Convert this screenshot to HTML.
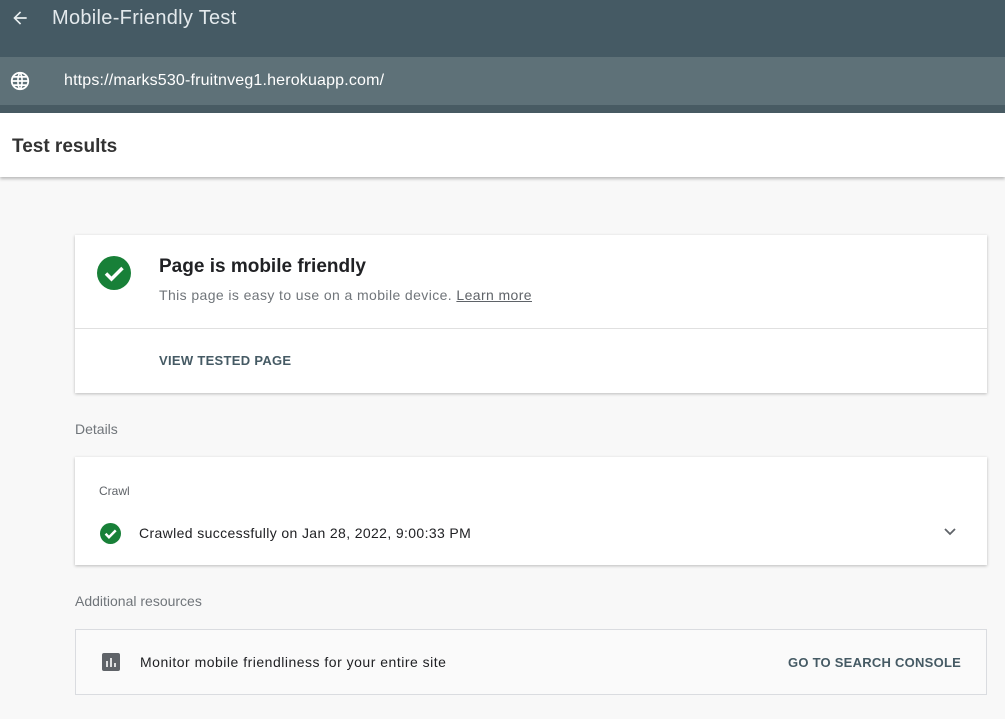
<!DOCTYPE html>
<html><head><style>
body{margin:0;width:1005px;height:719px;background:#f8f8f8;font-family:"Liberation Sans",sans-serif;overflow:hidden;position:relative}
.a{position:absolute;white-space:nowrap}
</style></head><body>
<div class="a" style="left:0;top:0;width:1005px;height:57px;background:#455a64"></div>
<svg class="a" style="left:10px;top:8px" width="20" height="20" viewBox="0 0 24 24"><path d="M20 11H7.8l5.6-5.6L12 4l-8 8 8 8 1.4-1.4L7.8 13H20z" fill="#e8eef0"/></svg>
<div class="a" style="left:52px;top:7px;font-size:20px;color:#e3e9ec;letter-spacing:.3px">Mobile-Friendly Test</div>
<div class="a" style="left:0;top:57px;width:1005px;height:48px;background:#5e7178"></div>
<div class="a" style="left:0;top:105px;width:1005px;height:8px;background:#485b63"></div>
<svg class="a" style="left:9px;top:70px" width="22" height="22" viewBox="0 0 24 24"><circle cx="12" cy="12" r="9" fill="none" stroke="#fff" stroke-width="2"/><path d="M3 12h18M12 3c-3 3-3 15 0 18M12 3c3 3 3 15 0 18M5 7.5h14M5 16.5h14" fill="none" stroke="#fff" stroke-width="1.8"/></svg>
<div class="a" style="left:64px;top:72px;font-size:16px;color:#fff;letter-spacing:.17px">https://marks530-fruitnveg1.herokuapp.com/</div>
<div class="a" style="left:0;top:113px;width:1005px;height:64px;background:#fff;box-shadow:0 2px 3px rgba(0,0,0,.25)"></div>
<div class="a" style="left:12px;top:136px;font-size:19px;color:#333;font-weight:bold">Test results</div>

<div class="a" style="left:75px;top:235px;width:912px;height:158px;background:#fff;box-shadow:0 1px 3px rgba(0,0,0,.25)"></div>
<svg class="a" style="left:97px;top:256px" width="34" height="34" viewBox="0 0 34 34"><circle cx="17" cy="17" r="17" fill="#188038"/><path d="M9 17.5l5.5 5.5L25.5 12" fill="none" stroke="#fff" stroke-width="3.5"/></svg>
<div class="a" style="left:159px;top:256px;font-size:19px;color:#202124;font-weight:bold">Page is mobile friendly</div>
<div class="a" style="left:159px;top:287px;font-size:14px;color:#70757a;letter-spacing:.4px">This page is easy to use on a mobile device. <span style="text-decoration:underline;color:#5f6368">Learn more</span></div>
<div class="a" style="left:75px;top:328px;width:912px;height:1px;background:#e0e0e0"></div>
<div class="a" style="left:159px;top:353px;font-size:13px;font-weight:bold;letter-spacing:.3px;color:#455a64">VIEW TESTED PAGE</div>

<div class="a" style="left:75px;top:421px;font-size:14px;color:#70757a">Details</div>
<div class="a" style="left:75px;top:457px;width:912px;height:108px;background:#fff;box-shadow:0 1px 3px rgba(0,0,0,.25)"></div>
<div class="a" style="left:99px;top:484px;font-size:12px;color:#5f6368">Crawl</div>
<svg class="a" style="left:100px;top:523px" width="21" height="21" viewBox="0 0 34 34"><circle cx="17" cy="17" r="17" fill="#188038"/><path d="M9 17.5l5.5 5.5L25.5 12" fill="none" stroke="#fff" stroke-width="4"/></svg>
<div class="a" style="left:139px;top:525px;font-size:14px;color:#202124;letter-spacing:.37px">Crawled successfully on Jan 28, 2022, 9:00:33 PM</div>
<svg class="a" style="left:943px;top:527px" width="14" height="10" viewBox="0 0 14 10"><path d="M2 2l5 5 5-5" fill="none" stroke="#5f6368" stroke-width="1.8"/></svg>

<div class="a" style="left:75px;top:593px;font-size:14px;color:#70757a">Additional resources</div>
<div class="a" style="left:75px;top:629px;width:910px;height:64px;background:#fafafa;border:1px solid #dadce0"></div>
<svg class="a" style="left:102px;top:653px" width="18" height="18" viewBox="0 0 18 18"><rect width="18" height="18" rx="2" fill="#5f6368"/><path d="M5 8v6M9 5v9M13 10v4" stroke="#fff" stroke-width="1.6"/></svg>
<div class="a" style="left:140px;top:654px;font-size:14px;color:#202124;letter-spacing:.5px">Monitor mobile friendliness for your entire site</div>
<div class="a" style="left:788px;top:655px;font-size:13px;font-weight:bold;letter-spacing:.25px;color:#455a64">GO TO SEARCH CONSOLE</div>
</body></html>
